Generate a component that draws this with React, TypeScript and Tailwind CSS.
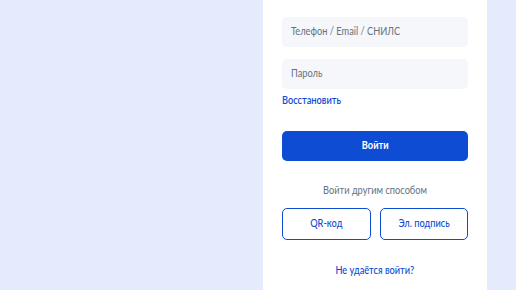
function T({ children, center = false }: { children: React.ReactNode; center?: boolean }) {
  return (
    <span className={`inline-block scale-x-[0.88] ${center ? 'origin-center' : 'origin-left'}`}>{children}</span>
  )
}

export default function App() {
  return (
    <div className="flex h-[290px] w-[516px] overflow-hidden bg-[#e4ebfd] pl-[263px] font-['Lato',sans-serif]">
      <div className="flex w-[224px] flex-col bg-white px-[19px] pt-[17px]">
        <div className="flex h-[30px] items-center rounded-[5px] bg-[#f5f7fa] px-[9px] text-[10.5px] text-[#66727f]">
          <T>Телефон / Email / СНИЛС</T>
        </div>
        <div className="mt-[12px] flex h-[30px] items-center rounded-[5px] bg-[#f5f7fa] px-[9px] text-[10.5px] text-[#66727f]">
          <T>Пароль</T>
        </div>
        <a className="mt-[4px] h-[14px] text-[10.5px] font-semibold leading-[14px] text-[#0d4cd3]">
          <T>Восстановить</T>
        </a>
        <button
          type="button"
          className="mt-[24px] h-[30px] rounded-[5px] bg-[#0d4cd3] text-[10.5px] font-bold text-white"
        >
          <T center>Войти</T>
        </button>
        <p className="mt-[22px] text-center text-[10.5px] leading-[14px] text-[#66727f]">
          <T center>Войти другим способом</T>
        </p>
        <div className="mt-[11px] flex gap-[9px]">
          <button
            type="button"
            className="h-[32px] flex-1 rounded-[5px] border border-[#0d4cd3] text-[10.5px] font-medium text-[#0d4cd3]"
          >
            <T center>QR-код</T>
          </button>
          <button
            type="button"
            className="h-[32px] flex-1 rounded-[5px] border border-[#0d4cd3] text-[10.5px] font-medium text-[#0d4cd3]"
          >
            <T center>Эл. подпись</T>
          </button>
        </div>
        <a className="mt-[23px] text-center text-[10.5px] font-medium leading-[14px] text-[#0d4cd3]">
          <T center>Не удаётся войти?</T>
        </a>
      </div>
    </div>
  )
}
